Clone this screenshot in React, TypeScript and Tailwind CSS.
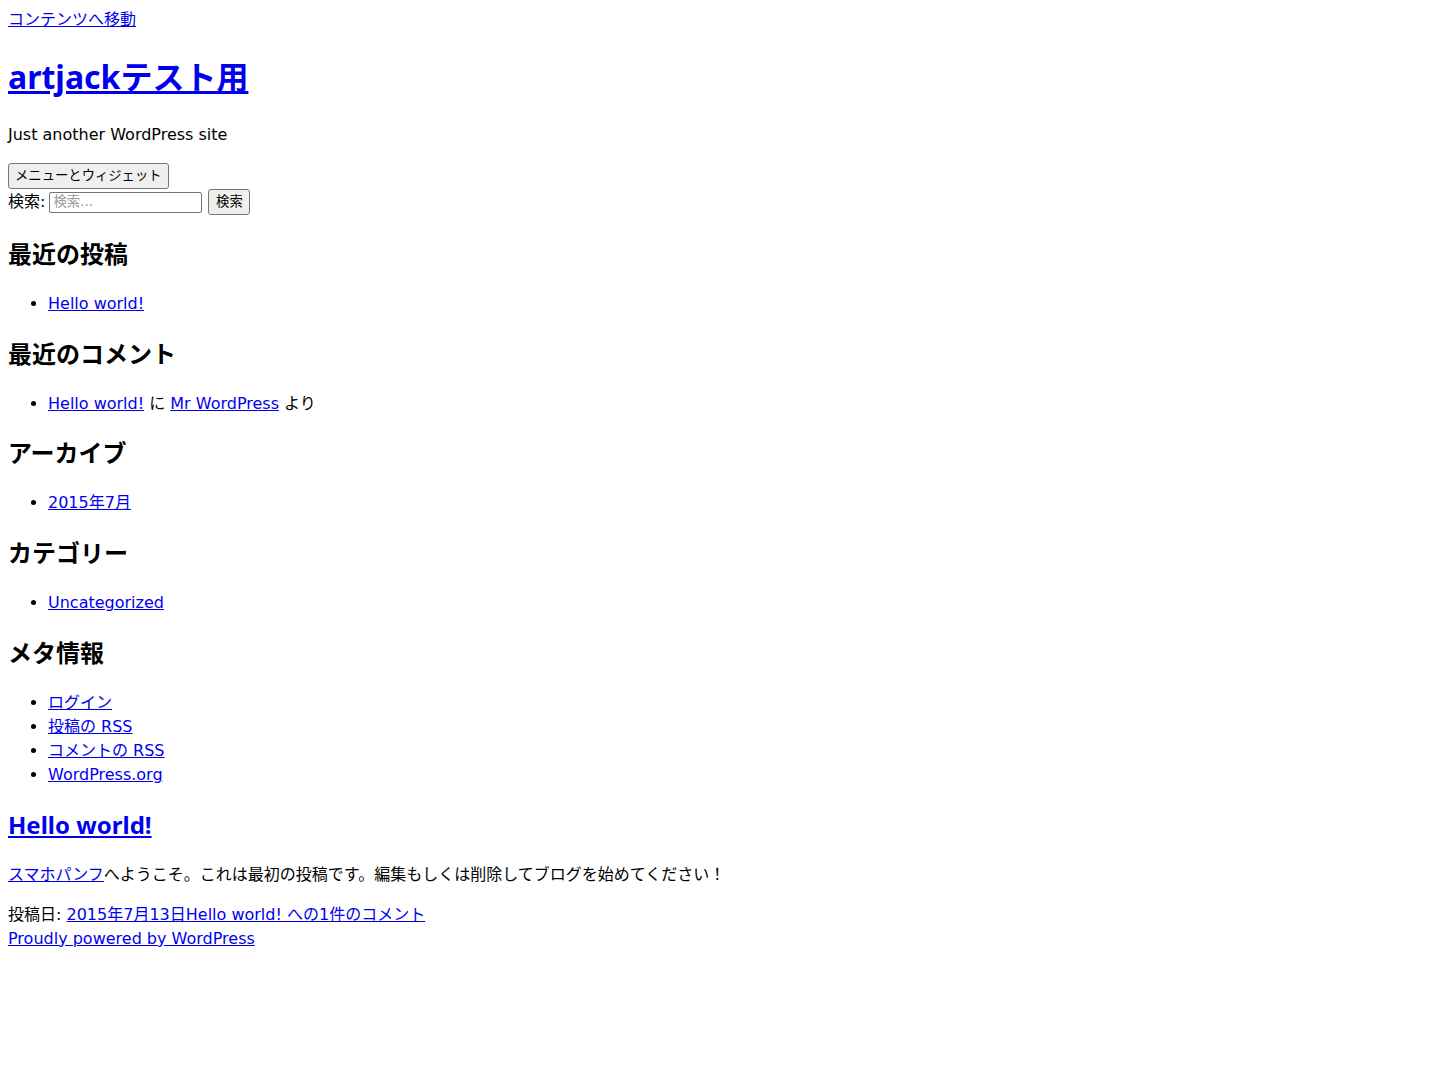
const font = "font-['DejaVu_Sans','Noto_Sans_CJK_JP',sans-serif]"
const headingFont = "font-['Noto_Sans','Noto_Sans_CJK_JP',sans-serif]"

const A = ({ children, className = "" }: { children: React.ReactNode; className?: string }) => (
  <a href="#" className={`text-[#0000ee] underline ${className}`}>
    {children}
  </a>
)

const WidgetTitle = ({ children }: { children: React.ReactNode }) => (
  <h2 className={`${headingFont} mt-[19.92px] mb-[19.92px] text-[24px] font-bold leading-[36px]`}>
    {children}
  </h2>
)

const List = ({ children }: { children: React.ReactNode }) => (
  <ul className="mb-4 list-disc pl-10">{children}</ul>
)

export default function App() {
  return (
    <div className={`${font} m-2 text-[16px] leading-[24px] text-black`}>
      <A>コンテンツへ移動</A>

      <header>
        <h1 className={`${headingFont} my-[21.44px] text-[32px] font-bold leading-[48px]`}>
          <A>artjackテスト用</A>
        </h1>
        <p className="my-4">Just another WordPress site</p>
      </header>

      <div>
        <button className="h-[26px] rounded-[3px] border border-[#767676] bg-[#efefef] px-[6px] text-[13.33px] leading-[20px]">
          メニューとウィジェット
        </button>
      </div>

      <form className="flex h-[27px] items-center">
        <label>検索:</label>
        <input
          placeholder="検索…"
          className="ml-[4px] h-[21px] w-[153px] rounded-[2px] border border-[#767676] px-[3px] text-[13.33px] placeholder:text-[#9a9a9a]"
        />
        <button
          type="button"
          className="ml-[6px] h-[26px] w-[42px] rounded-[3px] border border-[#767676] bg-[#efefef] text-[13.33px]"
        >
          検索
        </button>
      </form>

      <WidgetTitle>最近の投稿</WidgetTitle>
      <List>
        <li>
          <A>Hello world!</A>
        </li>
      </List>

      <WidgetTitle>最近のコメント</WidgetTitle>
      <List>
        <li>
          <A>Hello world!</A> に <A>Mr WordPress</A> より
        </li>
      </List>

      <WidgetTitle>アーカイブ</WidgetTitle>
      <List>
        <li>
          <A>2015年7月</A>
        </li>
      </List>

      <WidgetTitle>カテゴリー</WidgetTitle>
      <List>
        <li>
          <A>Uncategorized</A>
        </li>
      </List>

      <WidgetTitle>メタ情報</WidgetTitle>
      <List>
        <li>
          <A>ログイン</A>
        </li>
        <li>
          <A>投稿の RSS</A>
        </li>
        <li>
          <A>コメントの RSS</A>
        </li>
        <li>
          <A>WordPress.org</A>
        </li>
      </List>

      <article>
        <WidgetTitle>
          <A>Hello world!</A>
        </WidgetTitle>
        <p className="my-4">
          <A>スマホパンフ</A>へようこそ。これは最初の投稿です。編集もしくは削除してブログを始めてください！
        </p>
        <div>
          投稿日: <A>2015年7月13日</A>
          <A>Hello world! への1件のコメント</A>
        </div>
      </article>

      <footer>
        <A>Proudly powered by WordPress</A>
      </footer>
    </div>
  )
}
